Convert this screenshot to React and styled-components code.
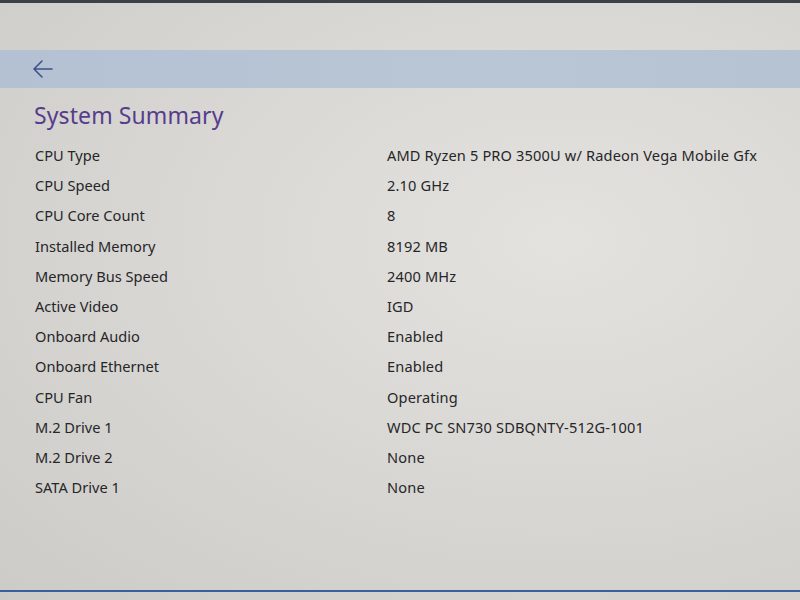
import React from "react";
import styled, { createGlobalStyle } from "styled-components";

const GlobalStyle = createGlobalStyle`
  html, body {
    margin: 0;
    padding: 0;
    width: 800px;
    height: 600px;
    overflow: hidden;
  }
  body {
    font-family: "Noto Sans", "Open Sans", sans-serif;
  }
`;

const rows = [
  ["CPU Type", "AMD Ryzen 5 PRO 3500U w/ Radeon Vega Mobile Gfx"],
  ["CPU Speed", "2.10 GHz"],
  ["CPU Core Count", "8"],
  ["Installed Memory", "8192 MB"],
  ["Memory Bus Speed", "2400 MHz"],
  ["Active Video", "IGD"],
  ["Onboard Audio", "Enabled"],
  ["Onboard Ethernet", "Enabled"],
  ["CPU Fan", "Operating"],
  ["M.2 Drive 1", "WDC PC SN730 SDBQNTY-512G-1001"],
  ["M.2 Drive 2", "None"],
  ["SATA Drive 1", "None"],
];

function App() {
  return (
    <>
      <GlobalStyle />
      <Screen>
        <TopEdge />
        <Header />
        <NavBar>
          <BackButton aria-label="back">
            <svg width="22" height="20" viewBox="0 0 22 20" fill="none">
              <path
                d="M20 10H2M10 2L2 10L10 18"
                stroke="#3d5288"
                strokeWidth="1.6"
                strokeLinecap="round"
                strokeLinejoin="round"
              />
            </svg>
          </BackButton>
        </NavBar>
        <Content>
          <Title>System Summary</Title>
          <Table>
            {rows.map(([label, value]) => (
              <Row key={label}>
                <Label>{label}</Label>
                <Value>{value}</Value>
              </Row>
            ))}
          </Table>
        </Content>
        <BottomLine />
        <Footer />
      </Screen>
    </>
  );
}

export default App;

const Screen = styled.div`
  width: 800px;
  height: 600px;
  display: flex;
  flex-direction: column;
  background: radial-gradient(
    ellipse at 70% 40%,
    #e3e2de 0%,
    #d9d8d5 45%,
    #cccbc8 100%
  );
`;

const TopEdge = styled.div`
  height: 3px;
  background: #3b4049;
`;

const Header = styled.div`
  height: 47px;
`;

const NavBar = styled.div`
  height: 38px;
  display: flex;
  align-items: center;
  padding-left: 32px;
  background: linear-gradient(90deg, #b3c1d3 0%, #b9c6d5 60%, #b6c3d2 100%);
`;

const BackButton = styled.div`
  display: flex;
  align-items: center;
  width: 22px;
  height: 20px;
`;

const Content = styled.div`
  flex: 1;
  padding: 12px 0 0 34px;
`;

const Title = styled.h1`
  margin: 0 0 10px;
  font-size: 23px;
  font-weight: 400;
  line-height: 30px;
  color: #573c8c;
  letter-spacing: 0.1px;
`;

const Table = styled.div`
  display: flex;
  flex-direction: column;
`;

const Row = styled.div`
  display: grid;
  grid-template-columns: 353px 1fr;
  height: 30.2px;
  align-items: center;
  font-size: 14.6px;
  color: #262628;
`;

const Label = styled.span`
  white-space: nowrap;
  padding-left: 1px;
`;

const Value = styled.span`
  white-space: nowrap;
  letter-spacing: 0.15px;
`;

const BottomLine = styled.div`
  height: 2px;
  background: #3a5ea0;
`;

const Footer = styled.div`
  height: 8px;
`;
